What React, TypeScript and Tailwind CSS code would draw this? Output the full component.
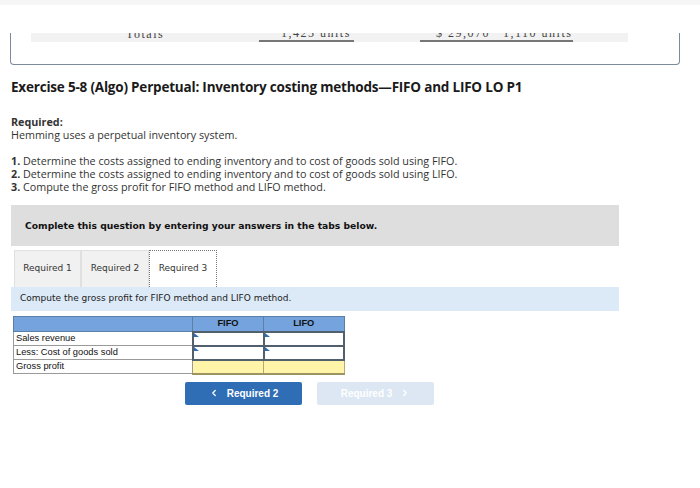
import { FunctionComponent } from "react";
import { ChevronLeft, ChevronRight } from "lucide-react";

const InputCell: FunctionComponent = () => (
  <td className="relative h-[13px] border-2 border-[#52606e] bg-white p-0">
    <span className="absolute left-0 top-0 h-0 w-0 border-l-[5px] border-t-[4px] border-l-[#2f6db5] border-t-transparent" />
  </td>
);

const App: FunctionComponent = () => {
  return (
    <div className="relative h-[488px] w-[700px] overflow-hidden bg-white font-['Open_Sans',sans-serif] text-[#222]">
      <div className="h-[5px] bg-[#f6f6f6]" />

      {/* clipped totals box */}
      <div className="ml-[10px] mt-[28px] h-[32px] w-[670px] rounded-b-[4px] border-x border-b border-[#7c8a99]">
        <div className="ml-[20px] mt-[4px] h-[9px] w-[597px] overflow-hidden bg-[#f2f2f2] font-['Liberation_Serif',serif] text-[12px] leading-[12px] text-[#444]">
          <div className="relative h-[9px] w-full">
            <span className="absolute left-[95px] top-[-5px] tracking-[1.5px]">Totals</span>
            <span className="absolute left-[250px] top-[-6px] tracking-[1.5px]">1,425 units</span>
            <span className="absolute left-[228px] bottom-0 h-[2px] w-[95px] bg-[#777]" />
            <span className="absolute left-[405px] top-[-6px] tracking-[1.5px]">$ 29,070</span>
            <span className="absolute left-[472px] top-[-6px] tracking-[1.5px]">1,110 units</span>
            <span className="absolute left-[389px] bottom-0 h-[2px] w-[153px] bg-[#777]" />
          </div>
        </div>
      </div>

      <div className="px-[11px]">
        <h1 className="mt-[13px] text-[13.5px] font-bold leading-[18px] tracking-[-0.2px] text-[#1a1a1a]">
          Exercise 5-8 (Algo) Perpetual: Inventory costing methods—FIFO and LIFO LO P1
        </h1>

        <div className="mt-[20px] text-[10.75px] leading-[13px] text-[#333]">
          <p className="font-bold">Required:</p>
          <p>Hemming uses a perpetual inventory system.</p>
          <p className="mt-[13px]"><b>1.</b> Determine the costs assigned to ending inventory and to cost of goods sold using FIFO.</p>
          <p><b>2.</b> Determine the costs assigned to ending inventory and to cost of goods sold using LIFO.</p>
          <p><b>3.</b> Compute the gross profit for FIFO method and LIFO method.</p>
        </div>

        <div className="mt-[11px] w-[608px] font-['DejaVu_Sans',sans-serif]">
          <div className="flex h-[41px] items-center bg-[#dedede] px-[14px] text-[9.2px] font-bold text-[#111]">
            Complete this question by entering your answers in the tabs below.
          </div>

          <div className="mt-[4px] flex pl-[3px] text-[9px] text-[#333]">
            <div className="flex h-[37px] w-[67px] items-center justify-center border border-b-0 border-[#e0e0e0] bg-[#f1f1f1]">Required 1</div>
            <div className="flex h-[37px] w-[68px] items-center justify-center border border-b-0 border-[#e0e0e0] bg-[#f1f1f1]">Required 2</div>
            <div className="flex h-[37px] w-[68px] items-center justify-center border border-dotted border-b-0 border-[#777] bg-white">Required 3</div>
          </div>

          <div className="flex h-[24px] items-center bg-[#dce9f7] px-[9px] text-[9px] text-[#222]">
            Compute the gross profit for FIFO method and LIFO method.
          </div>
        </div>

        <table className="ml-[2px] mt-[5px] w-[332px] border-collapse font-['Liberation_Sans',sans-serif] text-[9.3px] leading-[11px] text-[#111]">
          <thead>
            <tr className="h-[15px] bg-[#74a3dd]">
              <th className="w-[179px] border border-[#5c7fa8] p-0" />
              <th className="w-[71px] border border-[#5c7fa8] p-0 text-center font-bold text-[#111]">FIFO</th>
              <th className="border border-[#5c7fa8] p-0 text-center font-bold text-[#111]">LIFO</th>
            </tr>
          </thead>
          <tbody>
            <tr>
              <td className="h-[14px] border border-[#9a9a9a] px-[2px] py-0">Sales revenue</td>
              <InputCell />
              <InputCell />
            </tr>
            <tr>
              <td className="h-[14px] border border-[#9a9a9a] px-[2px] py-0">Less: Cost of goods sold</td>
              <InputCell />
              <InputCell />
            </tr>
            <tr>
              <td className="h-[14px] border border-[#9a9a9a] px-[2px] py-0">Gross profit</td>
              <td className="border border-b-2 border-[#b1aa74] border-b-[#9c9562] bg-[#fff4a8] p-0" />
              <td className="border border-b-2 border-[#b1aa74] border-b-[#9c9562] bg-[#fff4a8] p-0" />
            </tr>
          </tbody>
        </table>

        <div className="mt-[7px] flex gap-[15px] pl-[174px] font-['Liberation_Sans',sans-serif] text-[10px] font-bold">
          <div className="flex h-[23px] w-[117px] items-center justify-center gap-[8px] rounded-[2px] bg-[#2f6db5] text-white">
            <ChevronLeft size={10} strokeWidth={3} />
            <span>Required 2</span>
          </div>
          <div className="flex h-[23px] w-[117px] items-center justify-center gap-[8px] rounded-[2px] bg-[#dde7f3] text-white">
            <span>Required 3</span>
            <ChevronRight size={10} strokeWidth={3} />
          </div>
        </div>
      </div>
    </div>
  );
};

export default App;
